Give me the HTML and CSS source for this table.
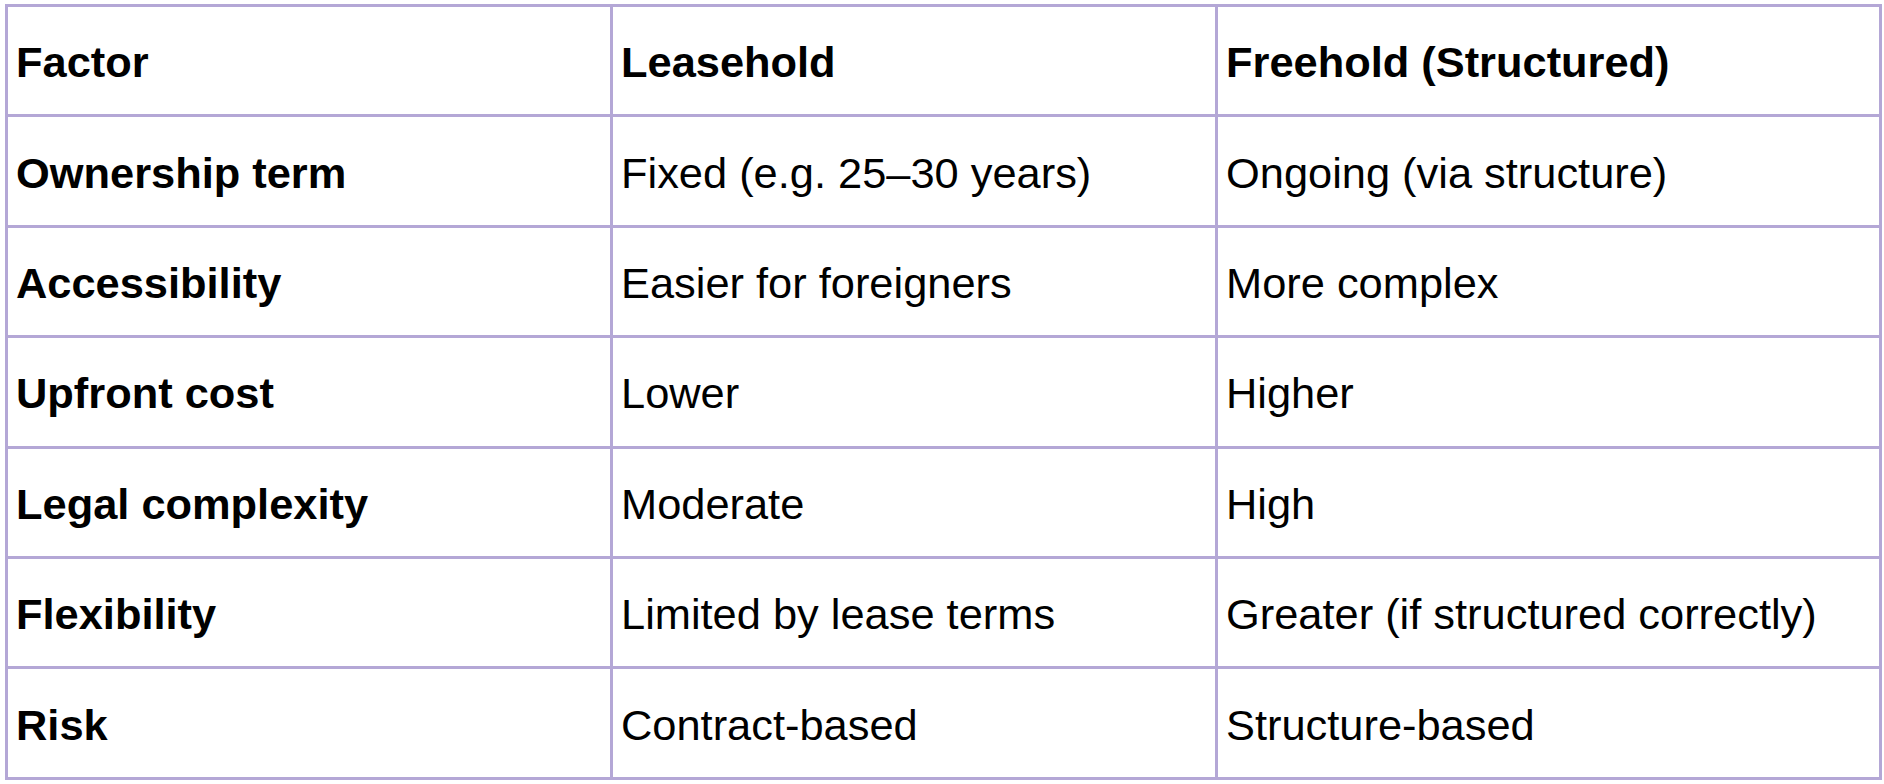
FILE: index.html
```html
<!DOCTYPE html>
<html lang="en">
<head>
<meta charset="utf-8">
<title>Leasehold vs Freehold</title>
<link rel="stylesheet" href="styles.css">
</head>
<body>
<table class="compare">
  <colgroup>
    <col class="col-factor">
    <col class="col-lease">
    <col class="col-free">
  </colgroup>
  <tr class="head">
    <td>Factor</td>
    <td>Leasehold</td>
    <td>Freehold (Structured)</td>
  </tr>
  <tr>
    <td class="label">Ownership term</td>
    <td>Fixed (e.g. 25–30 years)</td>
    <td>Ongoing (via structure)</td>
  </tr>
  <tr>
    <td class="label">Accessibility</td>
    <td>Easier for foreigners</td>
    <td>More complex</td>
  </tr>
  <tr>
    <td class="label">Upfront cost</td>
    <td>Lower</td>
    <td>Higher</td>
  </tr>
  <tr>
    <td class="label">Legal complexity</td>
    <td>Moderate</td>
    <td>High</td>
  </tr>
  <tr>
    <td class="label">Flexibility</td>
    <td>Limited by lease terms</td>
    <td>Greater (if structured correctly)</td>
  </tr>
  <tr>
    <td class="label">Risk</td>
    <td>Contract-based</td>
    <td>Structure-based</td>
  </tr>
</table>
</body>
</html>
```

FILE: styles.css
```css
html, body {
  margin: 0;
  padding: 0;
  background: #ffffff;
}

body {
  font-family: "Liberation Sans", Arial, sans-serif;
  color: #000000;
}

.compare {
  margin: 4px 0 0 5px;
  width: 1874px;
  table-layout: fixed;
  border-collapse: collapse;
  font-size: 43.4px;
}

.col-factor { width: 605px; }
.col-lease { width: 605px; }
.col-free { width: 664px; }

.compare tr {
  height: 110.4px;
}

.compare td {
  border: 3px solid #b4a7d6;
  padding: 4px 10px 0 8px;
  vertical-align: middle;
  white-space: nowrap;
  font-weight: 400;
}

.compare .head td,
.compare td.label {
  font-weight: 700;
}
```
